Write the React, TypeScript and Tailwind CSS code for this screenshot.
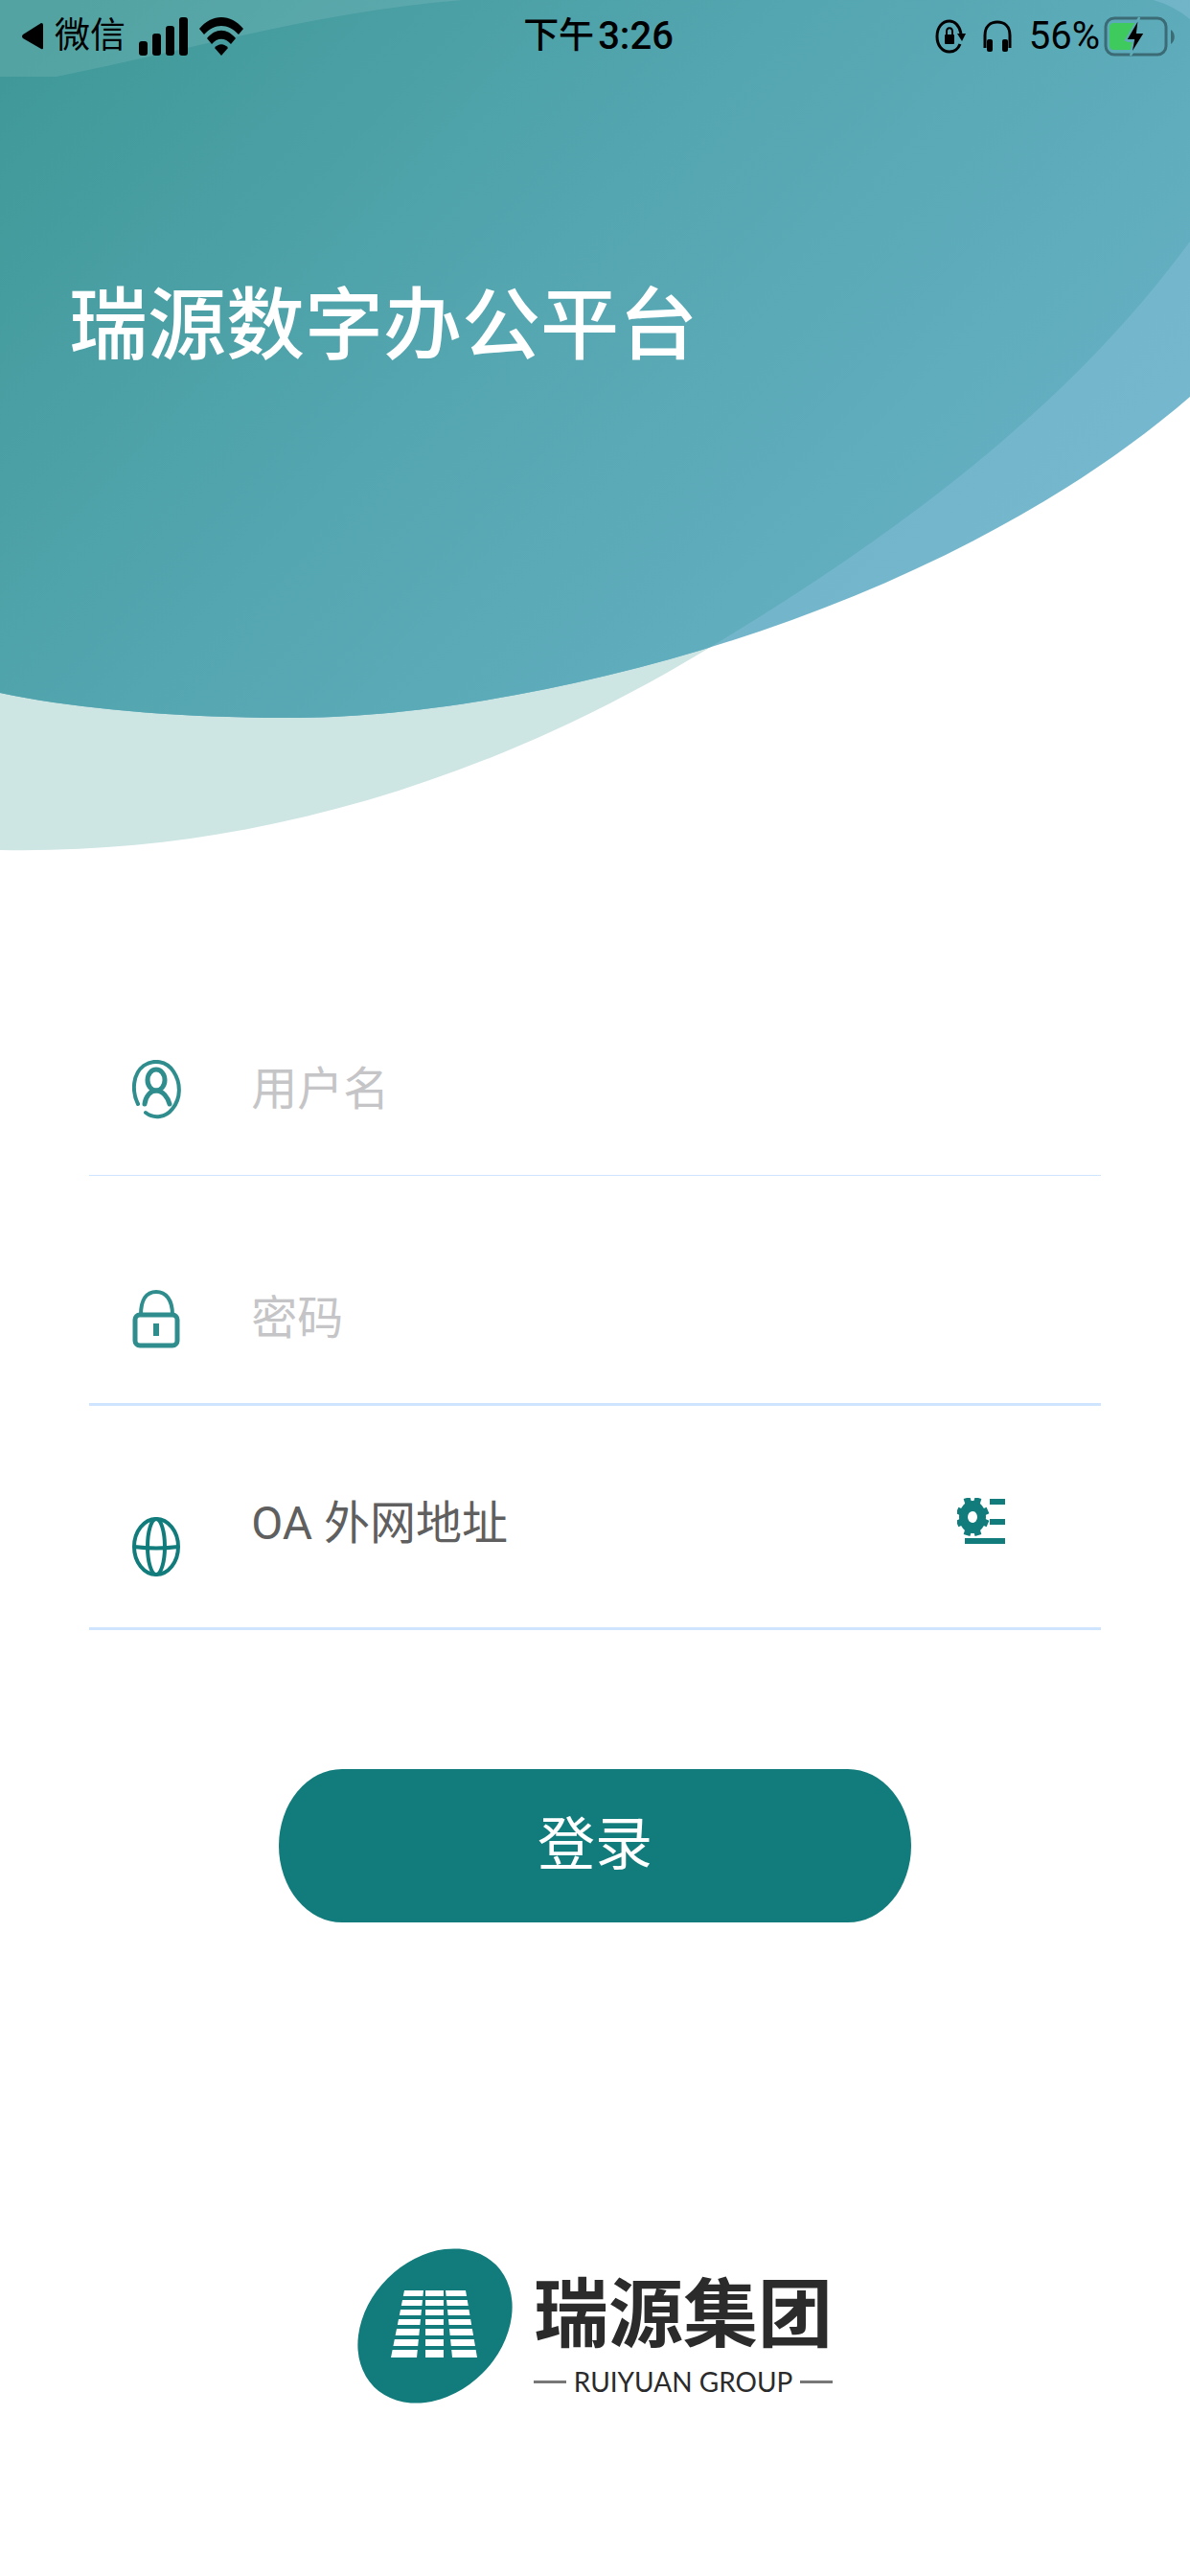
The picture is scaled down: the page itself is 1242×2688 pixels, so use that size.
import React, { useState } from "react";

interface FieldProps {
  id: string;
  label: string;
  type: string;
  icon: React.ReactNode;
  borderClass: string;
}

const HeroWaves = () => (
  <svg
    viewBox="0 0 1242 900"
    preserveAspectRatio="none"
    className="absolute inset-0 w-full h-full"
    aria-hidden="true"
  >
    <defs>
      <linearGradient
        id="wave"
        gradientUnits="userSpaceOnUse"
        x1="0"
        y1="80"
        x2="800"
        y2="837"
      >
        <stop offset="0" stopColor="#409998" />
        <stop offset="0.5" stopColor="#54a6b0" />
        <stop offset="1" stopColor="#65b0c3" />
      </linearGradient>
      <linearGradient
        id="waveEdge"
        gradientUnits="userSpaceOnUse"
        x1="700"
        y1="0"
        x2="1242"
        y2="500"
      >
        <stop offset="0" stopColor="#6cb1c1" />
        <stop offset="1" stopColor="#76b8cf" />
      </linearGradient>
      <clipPath id="bowl">
        <path d="M0 0V723C80 740 190 749 300 749C560 749 980 640 1242 414V0Z" />
      </clipPath>
    </defs>
    <path
      d="M0 0V887C260 892 510 815 737 678C950 550 1120 418 1242 252V0Z"
      fill="#cde5e3"
    />
    <g clipPath="url(#bowl)">
      <rect width="1242" height="900" fill="url(#waveEdge)" />
      <path
        d="M0 0V887C260 892 510 815 737 678C950 550 1120 418 1242 252V20Q1225 6 1204 0Z"
        fill="url(#wave)"
      />
      <path d="M0 0V80H59C200 52 330 12 483 0Z" fill="#fff" opacity="0.1" />
    </g>
  </svg>
);

const UserIcon = () => (
  <svg
    viewBox="0 0 51 62"
    className="w-[51px] h-[62px] shrink-0"
    fill="none"
    stroke="#2f8e8d"
    strokeWidth="4"
    strokeLinecap="round"
    aria-hidden="true"
  >
    <path d="M6 46C-1 32 1 14 12 6C22 -1 36 1 43 12C51 24 51 40 42 51C35 60 23 62 14 55" />
    <ellipse cx="25" cy="21" rx="9" ry="11" strokeWidth="5" />
    <path d="M13 46C14 38 19 32 25 32C32 32 37 39 39 46" strokeWidth="5" />
  </svg>
);

const LockIcon = () => (
  <svg
    viewBox="0 0 51 62"
    className="w-[51px] h-[62px] shrink-0"
    fill="none"
    stroke="#2f8e8d"
    strokeWidth="5"
    aria-hidden="true"
  >
    <path d="M9 27C9 11 15 3 25 3C35 3 42 11 42 27" strokeWidth="4" />
    <rect x="3" y="27" width="44" height="32" rx="5" />
    <path d="M25 36V49" strokeWidth="6" />
  </svg>
);

const GlobeIcon = () => (
  <svg
    viewBox="0 0 51 62"
    className="w-[51px] h-[62px] shrink-0"
    fill="none"
    stroke="#117c7b"
    strokeWidth="4"
    aria-hidden="true"
  >
    <ellipse cx="25" cy="31" rx="23" ry="29" />
    <ellipse cx="25" cy="31" rx="9" ry="29" />
    <path d="M2 31Q25 34 48 31" />
  </svg>
);

const GearListIcon = () => (
  <svg viewBox="0 0 50 48" className="w-[50px] h-12" aria-hidden="true">
    <ellipse cx="16" cy="20" rx="14" ry="17" fill="#117c7b" />
    <path
      d="M10 0L22 39M22 0L10 39M0 13L32 27M32 13L0 27"
      fill="none"
      stroke="#117c7b"
      strokeWidth="7"
    />
    <ellipse cx="16" cy="20" rx="5" ry="6" fill="#fff" />
    <path d="M34 1H50V7H34ZM34 22H50V28H34ZM8 42H50V48H8Z" fill="#117c7b" />
  </svg>
);

const StatusBar = () => (
  <div className="relative grid grid-cols-3 items-center h-[75px] pl-[23px] pr-4 text-black">
    <div className="flex items-center">
      <svg viewBox="0 0 22 28" className="w-[22px] h-7 mr-3" aria-hidden="true">
        <path d="M20 0Q22 0 22 2V26Q22 28 20 27L1 16Q-1 14 1 12Z" />
      </svg>
      <span className="text-[37px] leading-none">微信</span>
      <svg
        viewBox="0 0 51 40"
        className="w-[51px] h-10 ml-[14px]"
        aria-hidden="true"
      >
        <rect x="0" y="25" width="9" height="15" rx="3" />
        <rect x="14" y="17" width="9" height="23" rx="3" />
        <rect x="28" y="9" width="9" height="31" rx="3" />
        <rect x="42" y="0" width="9" height="40" rx="3" />
      </svg>
      <svg
        viewBox="0 0 46 40"
        className="w-[46px] h-10 ml-3"
        aria-hidden="true"
      >
        <path d="M0 12C13 -4 33 -4 46 12L41 18C30 6 16 6 5 18Z" />
        <path d="M8 22C17 11 29 11 38 22L33 28C27 21 19 21 13 28Z" />
        <path d="M16 32C20 27 26 27 30 32L23 40Z" />
      </svg>
    </div>
    <div className="flex items-center justify-center gap-1 leading-none font-medium">
      <span className="text-[37px]">下午</span>
      <span className="text-[40px]">3:26</span>
    </div>
    <div className="flex items-center justify-end">
      <svg
        viewBox="0 0 32 36"
        className="w-8 h-9 mr-[18px]"
        fill="none"
        stroke="#000"
        strokeWidth="3"
        aria-hidden="true"
      >
        <path d="M27 15C25 6 20 2 15 2C7 2 2 9 2 18C2 27 7 34 15 34C20 34 24 31 26 26" />
        <path d="M23 15H32L28 23Z" fill="#000" stroke="none" />
        <rect x="10" y="16" width="10" height="10" rx="1" fill="#000" stroke="none" />
        <path d="M12 17V13C12 8 18 8 18 13V17" strokeWidth="2" />
      </svg>
      <svg
        viewBox="0 0 30 34"
        className="w-[30px] h-[34px] mr-[18px]"
        aria-hidden="true"
      >
        <path
          d="M2 29V16C2 6 8 2 15 2S28 6 28 16V29"
          fill="none"
          stroke="#000"
          strokeWidth="3"
        />
        <rect x="4" y="20" width="6" height="13" rx="2" />
        <rect x="20" y="20" width="6" height="13" rx="2" />
      </svg>
      <span className="text-[40px] leading-none">56%</span>
      <svg
        viewBox="0 0 74 42"
        className="w-[74px] h-[42px] ml-1"
        aria-hidden="true"
      >
        <rect
          x="2"
          y="2"
          width="63"
          height="38"
          rx="9"
          fill="none"
          stroke="#3b6b75"
          strokeWidth="3"
        />
        <path d="M70 14C75 17 75 26 70 29Z" fill="#3b6b75" />
        <path d="M10 7H34L24 27H30L28 35H10Q6 35 6 30V12Q6 7 10 7Z" fill="#3fca5e" />
        <path
          d="M37 1L23 25H31L28 41L43 17H35Z"
          stroke="#60abb9"
          strokeWidth="2"
        />
      </svg>
    </div>
  </div>
);

const Field: React.FC<FieldProps> = ({ id, label, type, icon, borderClass }) => {
  const [value, setValue] = useState("");
  return (
    <div
      className={`flex items-center h-[180px] pl-[45px] border-[#cfe5ff] ${borderClass}`}
    >
      <label htmlFor={id} className="pr-[73px]">
        {icon}
      </label>
      <input
        id={id}
        type={type}
        value={value}
        placeholder={label}
        aria-label={label}
        onChange={(e) => setValue(e.target.value)}
        className="flex-1 min-w-0 h-full text-[48px] text-[#5f5f5f] placeholder:text-[#c5c5c7] outline-none"
      />
    </div>
  );
};

const BrandLogo = () => (
  <div className="flex items-center justify-center gap-[22px]">
    <svg
      viewBox="0 0 162 162"
      className="w-[162px] h-[162px]"
      role="img"
      aria-label="瑞源集团"
    >
      <ellipse
        cx="81"
        cy="81"
        rx="90"
        ry="70"
        transform="rotate(-45 81 81)"
        fill="#117c7b"
      />
      <path
        d="M49 44H69L62 114H35ZM71 44H90V114H71ZM92 44H113L125 114H99Z"
        fill="#fff"
      />
      <path
        d="M34 52H127M34 62H127M34 72H127M34 82H127M34 93H127M34 104H127"
        stroke="#117c7b"
        strokeWidth="4"
      />
    </svg>
    <div className="pt-3 text-[#2b2b2b]">
      <div className="text-[78px] leading-[104px] font-bold">瑞源集团</div>
      <div className="flex items-center gap-2 text-[28px] leading-8">
        <span className="flex-1 h-[3px] bg-[#777]" />
        <span className="font-[Lato]">RUIYUAN GROUP</span>
        <span className="flex-1 h-[3px] bg-[#777]" />
      </div>
    </div>
  </div>
);

const App = () => {
  const [address, setAddress] = useState("OA 外网地址");

  return (
    <div className="min-h-screen bg-white font-[Roboto,'Noto_Sans_CJK_SC',sans-serif]">
      <header className="relative h-[900px]">
        <HeroWaves />
        <StatusBar />
        <h1 className="relative pt-[217px] px-[72px] text-[82px] leading-[96px] font-medium text-white">
          瑞源数字办公平台
        </h1>
      </header>

      <main className="px-[7.5%] pt-[147px] pb-20">
        <form onSubmit={(e) => e.preventDefault()}>
          <Field
            id="username"
            label="用户名"
            type="text"
            icon={<UserIcon />}
            borderClass="border-b mb-[60px]"
          />
          <Field
            id="password"
            label="密码"
            type="password"
            icon={<LockIcon />}
            borderClass="border-b-3 mb-[54px]"
          />
          <div className="flex items-center h-[180px] pl-[45px] pr-[100px] border-b-3 border-[#cfe5ff]">
            <label htmlFor="address" className="pt-2 pr-[73px]">
              <GlobeIcon />
            </label>
            <div className="flex flex-1 items-center self-start h-32">
              <input
                id="address"
                aria-label="地址"
                value={address}
                onChange={(e) => setAddress(e.target.value)}
                className="flex-1 min-w-0 h-full text-[48px] text-[#5f5f5f] outline-none"
              />
              <button type="button" aria-label="设置" className="pt-1">
                <GearListIcon />
              </button>
            </div>
          </div>
          <button
            type="submit"
            className="block w-[62.5%] h-40 mx-auto mt-[145px] rounded-[66px/80px] bg-[#117c7b] text-[60px] text-white"
          >
            登录
          </button>
        </form>

        <footer className="mt-[340px]">
          <BrandLogo />
        </footer>
      </main>
    </div>
  );
};

export default App;
